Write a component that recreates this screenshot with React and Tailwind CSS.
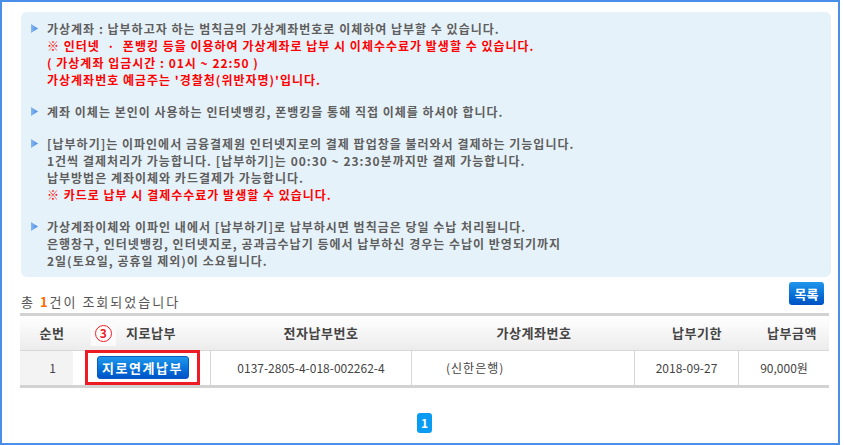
import React from "react";

function Bullet() {
  return (
    <svg width="7" height="9" viewBox="0 0 7 9" className="mt-[4px] shrink-0">
      <defs>
        <linearGradient id="bg" x1="0" x2="1" y1="0" y2="0">
          <stop offset="0" stopColor="#8ab8f0" />
          <stop offset="1" stopColor="#3f8be6" />
        </linearGradient>
      </defs>
      <polygon points="0,0 7,4.5 0,9" fill="url(#bg)" />
    </svg>
  );
}

function Item({ children, first }) {
  return (
    <div className={"flex gap-[9px] " + (first ? "" : "mt-[15px]")}>
      <Bullet />
      <div>{children}</div>
    </div>
  );
}

const Red = ({ children }) => <div className="text-[#ff0000]">{children}</div>;

export default function App() {
  return (
    <div className="w-[840px] h-[445px] border-2 border-[#4a8fe7] bg-white font-['Noto_Sans_CJK_KR','Noto_Sans',sans-serif]">
      <div className="ml-[19px] mt-[10px] w-[810px] h-[265px] rounded-[6px] bg-[#e6f2f9] pl-[10px] pt-[8px] text-[12px] leading-[17px] tracking-[1px] font-bold text-[#5e5e5e]">
        <Item first>
          <div>가상계좌 : 납부하고자 하는 범칙금의 가상계좌번호로 이체하여 납부할 수 있습니다.</div>
          <Red>※ 인터넷 &nbsp;·&nbsp; 폰뱅킹 등을 이용하여 가상계좌로 납부 시 이체수수료가 발생할 수 있습니다.</Red>
          <Red>( 가상계좌 입금시간 : 01시 ~ 22:50 )</Red>
          <Red>가상계좌번호 예금주는 '경찰청(위반자명)'입니다.</Red>
        </Item>
        <Item>
          <div>계좌 이체는 본인이 사용하는 인터넷뱅킹, 폰뱅킹을 통해 직접 이체를 하셔야 합니다.</div>
        </Item>
        <Item>
          <div>[납부하기]는 이파인에서 금융결제원 인터넷지로의 결제 팝업창을 불러와서 결제하는 기능입니다.</div>
          <div>1건씩 결제처리가 가능합니다. [납부하기]는 00:30 ~ 23:30분까지만 결제 가능합니다.</div>
          <div>납부방법은 계좌이체와 카드결제가 가능합니다.</div>
          <Red>※ 카드로 납부 시 결제수수료가 발생할 수 있습니다.</Red>
        </Item>
        <Item>
          <div>가상계좌이체와 이파인 내에서 [납부하기]로 납부하시면 범칙금은 당일 수납 처리됩니다.</div>
          <div>은행창구, 인터넷뱅킹, 인터넷지로, 공과금수납기 등에서 납부하신 경우는 수납이 반영되기까지</div>
          <div>2일(토요일, 공휴일 제외)이 소요됩니다.</div>
        </Item>
      </div>

      <div className="ml-[18px] w-[809px] h-[36px] pt-[5px] flex justify-between">
        <div className="self-end mb-[3px] ml-[1px] text-[13px] leading-[16px] tracking-[2px] text-[#555]">
          총 <span className="font-bold text-[#ff6a00]">1</span>건이 조회되었습니다
        </div>
        <div className="mr-[5px] w-[35px] h-[23px] rounded-[3px] bg-gradient-to-b from-[#2096ec] to-[#0050c4] text-white text-[13px] font-bold flex items-center justify-center">
          목록
        </div>
      </div>

      <div className="ml-[18px] w-[809px] border-t-[3px] border-b-[3px] border-[#d2d2d2]">
        <div className="flex h-[35px] border-b border-[#d8d8d8] bg-gradient-to-b from-[#ffffff] to-[#ececec] text-[13px] tracking-[0.5px] font-bold text-[#444]">
          <div className="w-[64px] flex items-center justify-center">순번</div>
          <div className="w-[129px] flex items-center pl-[7px]">
            <div className="w-[25px] h-[25px] bg-[#fbfbfb] flex items-center justify-center">
              <span className="w-[17px] h-[17px] rounded-full border-[1.5px] border-[#ee1c24] bg-white text-[#ee1c24] text-[12px] leading-none font-bold flex items-center justify-center">3</span>
            </div>
            <span className="ml-[10px]">지로납부</span>
          </div>
          <div className="w-[216px] flex items-center justify-center">전자납부번호</div>
          <div className="w-[210px] flex items-center justify-center">가상계좌번호</div>
          <div className="w-[116px] flex items-center justify-center">납부기한</div>
          <div className="w-[74px] flex items-center justify-center">납부금액</div>
        </div>
        <div className="flex h-[34px] text-[12px] text-[#444]">
          <div className="w-[65px] flex items-center justify-center bg-[linear-gradient(to_right,#f3f3f3_53px,#ffffff_53px)]">1</div>
          <div className="w-[125px]">
            <div className="-mt-[1px] w-[115px] h-[35px] border-[3px] border-[#ed1c24] flex items-center justify-center">
              <div className="w-[92px] h-[23px] rounded-[3px] border border-[#0a5cc0] bg-gradient-to-b from-[#2198ec] to-[#0052c8] text-white text-[13px] font-bold tracking-[1.5px] flex items-center justify-center">
                지로연계납부
              </div>
            </div>
          </div>
          <div className="w-[201px] border-l border-[#d6d6d6] flex items-center justify-center">0137-2805-4-018-002262-4</div>
          <div className="w-[223px] border-l border-[#d6d6d6] flex items-center pl-[34px] tracking-[1px]">(신한은행)</div>
          <div className="w-[104px] border-l border-[#d6d6d6] flex items-center justify-center">2018-09-27</div>
          <div className="w-[91px] border-l border-[#d6d6d6] flex items-center justify-center">90,000원</div>
        </div>
      </div>

      <div className="mt-[25px] ml-[415px] w-[15px] h-[20px] rounded-[3px] bg-[#0a9cf2] text-white text-[12px] font-bold flex items-center justify-center">
        1
      </div>
    </div>
  );
}
